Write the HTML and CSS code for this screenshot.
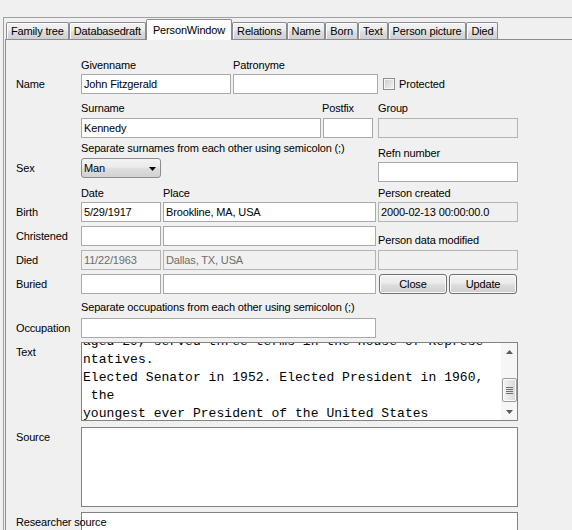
FILE: index.html
```html
<!DOCTYPE html>
<html>
<head>
<meta charset="utf-8">
<title>PersonWindow</title>
<link rel="stylesheet" href="styles.css">
</head>
<body>
<div class="window">
  <div class="tabpane">
    <div class="tabs">
      <div class="tab">Family tree</div>
      <div class="tab">Databasedraft</div>
      <div class="tab tab-active">PersonWindow</div>
      <div class="tab">Relations</div>
      <div class="tab">Name</div>
      <div class="tab">Born</div>
      <div class="tab">Text</div>
      <div class="tab">Person picture</div>
      <div class="tab">Died</div>
    </div>
    <div class="panel">
      <div class="form">
        <div class="row caps">
          <span class="lbl"></span>
          <span class="cap cap-given">Givenname</span>
          <span class="cap">Patronyme</span>
        </div>
        <div class="row line row-name">
          <span class="lbl">Name</span>
          <div class="field w-given">John Fitzgerald</div>
          <div class="field w-patr"></div>
          <span class="check"></span>
          <span class="check-text">Protected</span>
        </div>

        <div class="split">
          <div class="left">
            <div class="row caps">
              <span class="lbl"></span>
              <span class="cap cap-sur">Surname</span>
              <span class="cap">Postfix</span>
            </div>
            <div class="row line mt3">
              <span class="lbl"></span>
              <div class="field w-sur">Kennedy</div>
              <div class="field w-post"></div>
            </div>
            <div class="note mt3">Separate surnames from each other using semicolon (;)</div>
            <div class="row line mt3">
              <span class="lbl">Sex</span>
              <div class="combo">
                <span>Man</span>
                <svg class="combo-arrow" width="7" height="4" viewBox="0 0 7 4"><path d="M0 0H7L3.5 4Z" fill="#000"/></svg>
              </div>
            </div>
            <div class="row caps mt8">
              <span class="lbl"></span>
              <span class="cap cap-date">Date</span>
              <span class="cap">Place</span>
            </div>
            <div class="row line mt2">
              <span class="lbl">Birth</span>
              <div class="field w-date">5/29/1917</div>
              <div class="field w-place">Brookline, MA, USA</div>
            </div>
            <div class="row line mt4">
              <span class="lbl">Christened</span>
              <div class="field w-date"></div>
              <div class="field w-place"></div>
            </div>
            <div class="row line mt4">
              <span class="lbl">Died</span>
              <div class="field w-date disabled">11/22/1963</div>
              <div class="field w-place disabled">Dallas, TX, USA</div>
            </div>
            <div class="row line mt4">
              <span class="lbl">Buried</span>
              <div class="field w-date"></div>
              <div class="field w-place"></div>
            </div>
          </div>

          <div class="right">
            <div class="cap">Group</div>
            <div class="field w-right readonly mt3"></div>
            <div class="cap mt8">Refn number</div>
            <div class="field w-right mt2"></div>
            <div class="cap mt4">Person created</div>
            <div class="field w-right readonly mt2">2000-02-13 00:00:00.0</div>
            <div class="cap mt11">Person data modified</div>
            <div class="field w-right readonly mt3"></div>
            <div class="buttons mt4">
              <div class="btn btn-close">Close</div>
              <div class="btn btn-update">Update</div>
            </div>
          </div>
        </div>

        <div class="note mt6">Separate occupations from each other using semicolon (;)</div>
        <div class="row line mt4">
          <span class="lbl">Occupation</span>
          <div class="field w-occ"></div>
        </div>
        <div class="row top mt4">
          <span class="lbl lbl-top">Text</span>
          <div class="area area-text">
            <div class="area-content">aged 29, served three terms in the House of Represe
ntatives.
Elected Senator in 1952. Elected President in 1960,
 the
youngest ever President of the United States</div>
            <div class="scrollbar">
              <div class="sb-btn">
                <svg width="7" height="4" viewBox="0 0 7 4"><path d="M0 4L3.5 0L7 4Z" fill="#5a5a5a"/></svg>
              </div>
              <div class="sb-thumb">
                <span class="grip"></span><span class="grip"></span><span class="grip"></span><span class="grip"></span>
              </div>
              <div class="sb-btn sb-down">
                <svg width="7" height="4" viewBox="0 0 7 4"><path d="M0 0H7L3.5 4Z" fill="#5a5a5a"/></svg>
              </div>
            </div>
          </div>
        </div>
        <div class="row top mt6">
          <span class="lbl lbl-top">Source</span>
          <div class="area area-source"></div>
        </div>
        <div class="row top mt5">
          <span class="lbl lbl-top lbl-over">Researcher source</span>
          <div class="area area-research"></div>
        </div>
      </div>
    </div>
  </div>
</div>
</body>
</html>
```

FILE: styles.css
```css
* { box-sizing: border-box; }

html, body { margin: 0; padding: 0; }

body {
  width: 572px;
  height: 530px;
  overflow: hidden;
  background: #f0f0f0;
  font-family: "Liberation Sans", Arial, sans-serif;
  font-size: 11px;
  letter-spacing: -0.15px;
  color: #000;
}

.window {
  margin: 17px 0 0 3px;
  border-top: 1px solid #a0a0a0;
  border-left: 1px solid #a0a0a0;
  padding-left: 1px;
  height: 520px;
}

.tabs {
  display: flex;
  align-items: flex-end;
  height: 21px;
  padding-left: 1px;
  position: relative;
  z-index: 1;
}

.tab {
  height: 17px;
  line-height: 16px;
  padding: 0 4px;
  border: 1px solid #898c95;
  border-bottom: none;
  border-radius: 2px 2px 0 0;
  background: linear-gradient(#f3f3f3 0%, #ebebeb 45%, #dddddd 55%, #d0d0d0 100%);
  box-shadow: inset 1px 1px 0 #fbfbfb;
  white-space: nowrap;
}

.tab-active {
  height: 21px;
  line-height: 20px;
  padding: 0 6px;
  margin-bottom: -1px;
  background: #fcfcfc;
  box-shadow: none;
}

.panel {
  border-top: 1px solid #898c95;
  border-left: 1px solid #898c95;
  height: 500px;
}

.form {
  padding: 18px 0 0 10px;
  width: 512px;
}

.row { display: flex; align-items: center; }
.row.top { align-items: flex-start; }
.line { height: 20px; }
.caps { height: 14px; }

.lbl {
  width: 65px;
  flex: none;
  line-height: 14px;
  white-space: nowrap;
}
.lbl-top { padding-top: 3px; }
.lbl-over { position: relative; z-index: 2; }

.cap { line-height: 14px; height: 14px; white-space: nowrap; }
.cap-given { width: 152px; flex: none; }
.cap-sur { width: 241px; flex: none; }
.cap-date { width: 82px; flex: none; }

.row-name { margin-top: 2px; }

.mt2 { margin-top: 2px; }
.mt3 { margin-top: 3px; }
.mt4 { margin-top: 4px; }
.mt5 { margin-top: 5px; }
.mt6 { margin-top: 6px; }
.mt8 { margin-top: 8px; }
.mt11 { margin-top: 11px; }

.field {
  height: 20px;
  border: 1px solid #a9a9a9;
  background: #fff;
  padding: 0 2px;
  line-height: 18px;
  white-space: nowrap;
  overflow: hidden;
  flex: none;
}
.field.disabled {
  background: #f0f0f0;
  border-color: #b4b4b4;
  color: #6d6d6d;
}
.field.readonly {
  background: #f0f0f0;
  border-color: #b4b4b4;
}

.w-given { width: 150px; }
.w-patr { width: 145px; margin-left: 2px; }
.w-sur { width: 240px; }
.w-post { width: 50px; margin-left: 2px; }
.w-date { width: 80px; }
.w-place { width: 213px; margin-left: 2px; }
.w-right { width: 140px; }
.w-occ { width: 295px; }

.check {
  width: 12px;
  height: 12px;
  margin-left: 5px;
  border: 1px solid #8e8f8f;
  background: linear-gradient(135deg, #c9cbce 0%, #e4e5e7 60%, #f2f2f2 100%);
  box-shadow: inset 0 0 0 1px #f6f6f6;
  flex: none;
}
.check-text { margin-left: 4px; line-height: 14px; }

.split { display: flex; margin-top: 7px; }
.left { width: 362px; flex: none; }
.right { width: 140px; flex: none; }

.note { padding-left: 65px; line-height: 14px; height: 14px; white-space: nowrap; }

.combo {
  width: 80px;
  height: 20px;
  border: 1px solid #8c8c8c;
  border-radius: 3px;
  background: linear-gradient(#f3f3f3 0%, #ebebeb 45%, #dddddd 55%, #d2d2d2 100%);
  display: flex;
  align-items: center;
  justify-content: space-between;
  padding: 0 4px 0 2px;
  line-height: 18px;
}
.combo-arrow { display: block; margin-top: 2px; }

.buttons { display: flex; height: 20px; }
.btn {
  width: 68px;
  height: 20px;
  border: 1px solid #707070;
  border-radius: 3px;
  background: linear-gradient(#f2f2f2 0%, #ebebeb 45%, #dddddd 55%, #cfcfcf 100%);
  box-shadow: inset 0 0 0 1px #fafafa;
  text-align: center;
  line-height: 18px;
}
.btn-close { margin-left: 1px; }
.btn-update { margin-left: 2px; }

.area {
  width: 437px;
  border: 1px solid #828282;
  background: #fff;
  flex: none;
  overflow: hidden;
}
.area-text { height: 79px; display: flex; }
.area-source { height: 80px; }
.area-research { height: 30px; }

.area-content {
  flex: 1;
  margin-top: -10px;
  padding-left: 1px;
  font-family: "Liberation Mono", "Courier New", monospace;
  font-size: 13px;
  letter-spacing: 0.05px;
  line-height: 18px;
  white-space: pre;
  overflow: hidden;
}

.scrollbar {
  width: 16px;
  flex: none;
  background: #f6f6f6;
  display: flex;
  flex-direction: column;
  align-items: center;
}
.sb-btn {
  height: 17px;
  width: 16px;
  display: flex;
  align-items: center;
  justify-content: center;
}
.sb-btn svg { display: block; }
.sb-down { margin-top: auto; }

.sb-thumb {
  margin-top: 18px;
  width: 15px;
  height: 24px;
  border: 1px solid #9b9b9b;
  border-radius: 2px;
  background: linear-gradient(90deg, #f4f4f4 0%, #e6e6e6 50%, #d6d6d6 100%);
  box-shadow: inset 0 0 0 1px #fbfbfb;
  display: flex;
  flex-direction: column;
  align-items: center;
  justify-content: center;
  gap: 1px;
}
.grip {
  width: 7px;
  height: 1px;
  background: #6e6e6e;
}
```
